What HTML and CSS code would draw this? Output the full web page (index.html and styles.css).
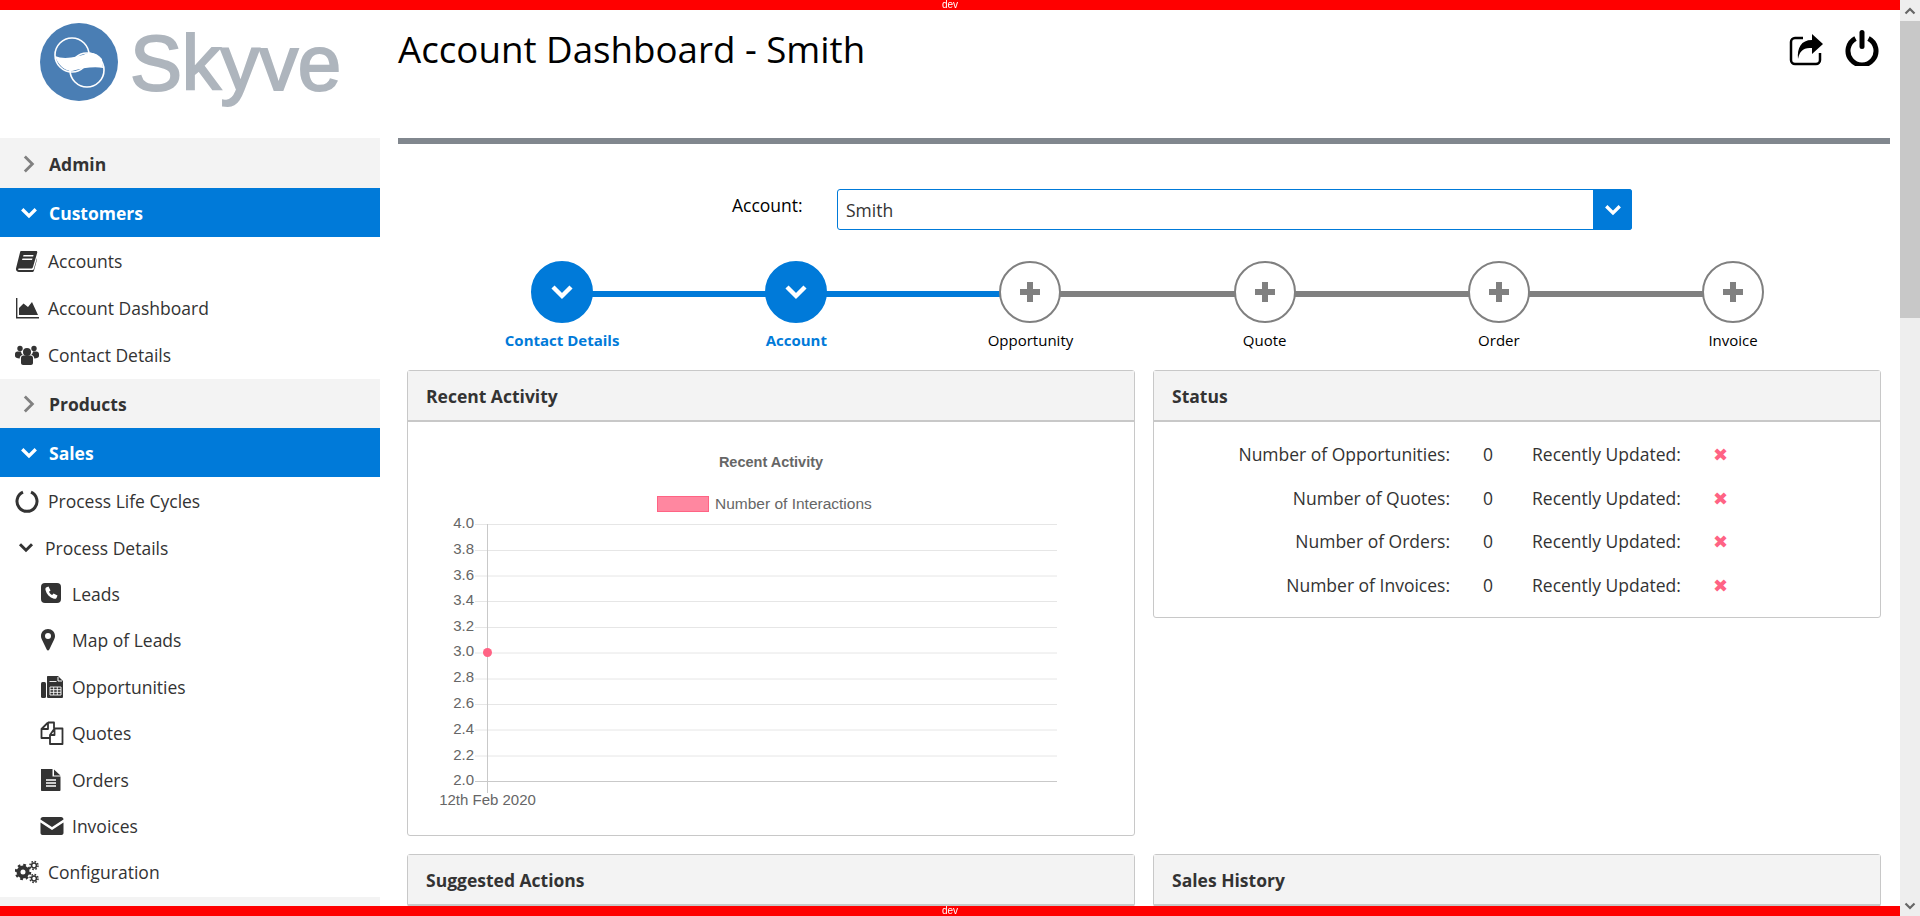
FILE: index.html
```html
<!DOCTYPE html>
<html lang="en">
<head>
    <meta charset="UTF-8">
    <meta name="viewport" content="width=device-width, initial-scale=1.0">
    <title>Account Dashboard - Smith</title>
    <link rel="stylesheet" href="styles.css">
</head>
<body>
    <svg class="icon-defs" aria-hidden="true">
        <symbol id="chev-down" viewBox="0 0 24 16"><path d="M3 3l9 9 9-9" fill="none" stroke="currentColor" stroke-width="4.4"/></symbol>
        <symbol id="chev-right" viewBox="0 0 16 24"><path d="M3 3l9 9-9 9" fill="none" stroke="currentColor" stroke-width="3.4"/></symbol>
    </svg>

    <div class="dev-bar dev-top">dev</div>
    <div class="dev-bar dev-bottom">dev</div>

    <div class="page">
        <aside class="sidebar">
            <div class="logo">
                <svg class="logo-mark" viewBox="0 0 78 78">
                    <circle cx="39" cy="39" r="39" fill="#4a7eb4"/>
                    <circle cx="32" cy="32" r="17" fill="none" stroke="#fff" stroke-width="1.6"/>
                    <circle cx="47" cy="47" r="17" fill="none" stroke="#fff" stroke-width="1.6"/>
                    <path d="M15 33C24 37 38 34 48 30C53 29 58 31 62 36L63 45C55 43 42 45 32 48C25 48 18 42 15 33Z" fill="#fff"/>
                </svg>
                <span class="logo-text">Skyve</span>
            </div>

            <nav>
                <div class="nav-group"><svg class="group-chev closed"><use href="#chev-right"/></svg>Admin</div>
                <div class="nav-group active"><svg class="group-chev"><use href="#chev-down"/></svg>Customers</div>
                <div class="nav-list customers-list">
                    <div class="nav-row">
                        <svg class="nav-icon" viewBox="0 0 24 24"><path d="M6 2h15c1 0 1.500.8 1.200 1.800L18 18c-.4 1-1 1.500-2 1.500H4c-1.200 0-1.200 1.500 0 1.500h13.500c.7 0 1-.3 1.300-1l3.200-11v1.500L19 21.500c-.3 1-1 1.500-2 1.500H4c-2.300 0-3.500-1.800-2.900-4L5 3.500C5.200 2.600 5.500 2 6 2zm2.500 4l-.4 1.500h10l.4-1.500zm-1 3.500L7 11h10l.5-1.500z" fill="#333"/></svg>
                        Accounts
                    </div>
                    <div class="nav-row">
                        <svg class="nav-icon" viewBox="0 0 24 24"><path d="M1 2h1.400v19H24v1.400H1z" fill="#333"/><path d="M4 19v-7l4.500-4.500L13 11l4-5 6 13z" fill="#333"/></svg>
                        Account Dashboard
                    </div>
                    <div class="nav-row">
                        <svg class="nav-icon" viewBox="0 0 24 24"><g fill="#333"><circle cx="12" cy="9" r="4"/><circle cx="5" cy="5.500" r="2.700"/><circle cx="19" cy="5.500" r="2.700"/><path d="M6 15c0-1.500 1-2.500 2.500-2.500h7c1.500 0 2.500 1 2.500 2.500v5c0 1.200-1 2-2 2H8c-1 0-2-.8-2-2z"/><path d="M0 11c0-1.500 1-2.500 2.500-2.500H6c.2 1.500.8 2.500 1.800 3.300C6 12.200 4.800 13.500 4.700 15.500 2 15.500 0 14.500 0 13z"/><path d="M24 11c0-1.500-1-2.500-2.500-2.500H18c-.2 1.500-.8 2.500-1.800 3.300 1.800.4 3 1.700 3.100 3.700 2.700 0 4.700-1 4.700-2.500z"/></g></svg>
                        Contact Details
                    </div>
                </div>
                <div class="nav-group"><svg class="group-chev closed"><use href="#chev-right"/></svg>Products</div>
                <div class="nav-group active"><svg class="group-chev"><use href="#chev-down"/></svg>Sales</div>
                <div class="nav-list sales-list">
                    <div class="nav-row">
                        <svg class="nav-icon" viewBox="0 0 24 24"><path d="M8 3.200a10 10 0 1 0 8 0" fill="none" stroke="#333" stroke-width="3"/></svg>
                        Process Life Cycles
                    </div>
                    <div class="nav-row nav-parent">
                        <svg class="parent-chev"><use href="#chev-down"/></svg>
                        Process Details
                    </div>
                    <div class="nav-row nav-sub">
                        <svg class="nav-icon" viewBox="0 0 24 24"><rect x="1" y="1" width="20" height="20" rx="4" fill="#333"/><path d="M6 5.500l2.500-1 2 4-1.500 1.300c.6 1.500 1.700 2.600 3.200 3.200l1.300-1.500 4 2-1 2.500c-.4.800-1.500 1-2.500.8C9.500 15.500 6.500 12.500 5.500 8c-.2-1 0-2 .5-2.500z" fill="#fff"/></svg>
                        Leads
                    </div>
                    <div class="nav-row nav-sub">
                        <svg class="nav-icon" viewBox="0 0 24 24"><path d="M8 1c4 0 7 3 7 7 0 1.500-.4 2.500-1 3.800L9.300 21.500c-.3.700-.8 1-1.300 1s-1-.3-1.300-1L2 11.800C1.400 10.500 1 9.500 1 8c0-4 3-7 7-7zm0 4a3 3 0 1 0 0 6 3 3 0 0 0 0-6z" fill="#333"/></svg>
                        Map of Leads
                    </div>
                    <div class="nav-row nav-sub">
                        <svg class="nav-icon" viewBox="0 0 24 24"><g fill="#333"><rect x="1" y="7" width="5" height="16" rx="1.500"/><path d="M8 1h10l5 5v15.500c0 1-.5 1.500-1.500 1.500h-13C7.500 23 7 22.500 7 21.500V2c0-.6.400-1 1-1z"/></g><path d="M18 2v4h4" fill="none" stroke="#fff"/><path d="M9.500 6.500h7M10 12h11v8H10zM13.700 12v8M17.300 12v8M10 14.700h11M10 17.300h11" fill="none" stroke="#fff" stroke-width=".9"/></svg>
                        Opportunities
                    </div>
                    <div class="nav-row nav-sub">
                        <svg class="nav-icon" viewBox="0 0 24 24"><path d="M8 1.500h6v6M8 1.500L1.500 8v9h8.500M1.500 8H8V1.500M14.500 7.500h8V23H10V14l4.500-6.500V14H10" fill="none" stroke="#333" stroke-width="1.800" stroke-linejoin="round"/></svg>
                        Quotes
                    </div>
                    <div class="nav-row nav-sub">
                        <svg class="nav-icon" viewBox="0 0 24 24"><path d="M1 1h11.500v7.500H20.500V22c0 .6-.4 1-1 1H2c-.6 0-1-.4-1-1zM14 1.500l6.500 6H14z" fill="#333"/><path d="M6 12h10M6 15h10M6 18h10" stroke="#fff" stroke-width="1.500"/></svg>
                        Orders
                    </div>
                    <div class="nav-row nav-sub">
                        <svg class="nav-icon" viewBox="0 0 24 24"><path d="M3 3h18c1.500 0 2.500 1 2.500 2.500L12 13 .5 5.500C.5 4 1.500 3 3 3zM.5 8.500L12 16l11.500-7.500V19c0 1.200-1 2-2 2h-19c-1 0-2-.8-2-2z" fill="#333"/></svg>
                        Invoices
                    </div>
                    <div class="nav-row">
                        <svg class="nav-icon" viewBox="0 0 24 24"><g fill="none" stroke="#333"><circle cx="8" cy="12" r="4.500" stroke-width="4"/><circle cx="8" cy="12" r="7" stroke-width="2.500" stroke-dasharray="2.700 2.800"/><circle cx="19" cy="5.500" r="2.400" stroke-width="1.500"/><circle cx="19" cy="5.500" r="4" stroke-width="1.500" stroke-dasharray="1.600 1.550"/><circle cx="19" cy="18.500" r="2.400" stroke-width="1.500"/><circle cx="19" cy="18.500" r="4" stroke-width="1.500" stroke-dasharray="1.600 1.550"/></g></svg>
                        Configuration
                    </div>
                </div>
                <div class="nav-group"></div>
            </nav>
        </aside>

        <main class="content">
            <header class="page-head">
                <h1>Account Dashboard - Smith</h1>
                <div class="head-actions">
                    <svg class="share-icon" viewBox="0 0 34 34"><path d="M14 6H6a4 4 0 0 0-4 4v18a4 4 0 0 0 4 4h21a4 4 0 0 0 4-4v-7" fill="none" stroke="#000" stroke-width="2.500"/><path d="M23 2l11 10-11 10v-6c-7 0-12 1-14 11-1-11 3-19 14-19z" fill="#000"/></svg>
                    <svg class="power-icon" viewBox="0 0 34 36"><path d="M10.500 8.500a14 14 0 1 0 13 0" fill="none" stroke="#000" stroke-width="5"/><path d="M17 2.500v14" fill="none" stroke="#000" stroke-width="5" stroke-linecap="round"/></svg>
                </div>
            </header>

            <div class="account-form">
                <label class="account-label">Account:</label>
                <div class="account-select">
                    <span class="account-value">Smith</span>
                    <span class="account-btn"><svg class="select-chev"><use href="#chev-down"/></svg></span>
                </div>
            </div>

            <div class="steps">
                <div class="step done">
                    <span class="step-dot"><svg class="step-chev"><use href="#chev-down"/></svg></span>
                    <span class="step-label">Contact Details</span>
                </div>
                <div class="step done">
                    <span class="step-dot"><svg class="step-chev"><use href="#chev-down"/></svg></span>
                    <span class="step-label">Account</span>
                </div>
                <div class="step">
                    <span class="step-dot"><span class="step-plus"></span></span>
                    <span class="step-label">Opportunity</span>
                </div>
                <div class="step">
                    <span class="step-dot"><span class="step-plus"></span></span>
                    <span class="step-label">Quote</span>
                </div>
                <div class="step">
                    <span class="step-dot"><span class="step-plus"></span></span>
                    <span class="step-label">Order</span>
                </div>
                <div class="step">
                    <span class="step-dot"><span class="step-plus"></span></span>
                    <span class="step-label">Invoice</span>
                </div>
            </div>

            <div class="panels">
                <section class="panel panel-chart">
                    <h2 class="panel-title">Recent Activity</h2>
                    <!-- viewBox uses page coordinates so the ticks are easy to line up -->
                    <svg class="chart" viewBox="408 422 726 413">
                        <text class="chart-title" x="771" y="467" text-anchor="middle">Recent Activity</text>
                        <rect x="657.500" y="496.500" width="51" height="15" fill="#ff87a0" stroke="#ff6384"/>
                        <text class="chart-legend" x="715" y="508.500">Number of Interactions</text>
                        <g stroke="#e6e6e6" stroke-width="1">
                            <path d="M475 524.500H1057M475 550.500H1057M475 576H1057M475 601.500H1057M475 627.500H1057M475 653H1057M475 679H1057M475 704.500H1057M475 730H1057M475 756H1057"/>
                        </g>
                        <path d="M475 781.500H1057M487.500 524V793" stroke="#c9c9c9" fill="none"/>
                        <g class="chart-tick" text-anchor="end">
                            <text x="474" y="528">4.0</text>
                            <text x="474" y="554">3.8</text>
                            <text x="474" y="580">3.6</text>
                            <text x="474" y="605">3.4</text>
                            <text x="474" y="631">3.2</text>
                            <text x="474" y="656">3.0</text>
                            <text x="474" y="682">2.8</text>
                            <text x="474" y="708">2.6</text>
                            <text x="474" y="734">2.4</text>
                            <text x="474" y="760">2.2</text>
                            <text x="474" y="785">2.0</text>
                        </g>
                        <text class="chart-tick" x="487.500" y="805" text-anchor="middle">12th Feb 2020</text>
                        <circle cx="487.500" cy="652.500" r="4.500" fill="#ff6384"/>
                    </svg>
                </section>

                <section class="panel panel-status">
                    <h2 class="panel-title">Status</h2>
                    <div class="status-grid">
                        <span class="status-label">Number of Opportunities:</span><span class="status-value">0</span><span>Recently Updated:</span><span class="status-x">&#10006;</span>
                        <span class="status-label">Number of Quotes:</span><span class="status-value">0</span><span>Recently Updated:</span><span class="status-x">&#10006;</span>
                        <span class="status-label">Number of Orders:</span><span class="status-value">0</span><span>Recently Updated:</span><span class="status-x">&#10006;</span>
                        <span class="status-label">Number of Invoices:</span><span class="status-value">0</span><span>Recently Updated:</span><span class="status-x">&#10006;</span>
                    </div>
                </section>

                <section class="panel">
                    <h2 class="panel-title">Suggested Actions</h2>
                </section>

                <section class="panel">
                    <h2 class="panel-title">Sales History</h2>
                </section>
            </div>
        </main>

        <div class="scrollbar">
            <div class="scroll-btn"><svg class="scroll-chev up"><use href="#chev-down"/></svg></div>
            <div class="scroll-thumb"></div>
            <div class="scroll-track"></div>
            <div class="scroll-btn"><svg class="scroll-chev"><use href="#chev-down"/></svg></div>
        </div>
    </div>
</body>
</html>
```

FILE: styles.css
```css
html, body {
    margin: 0;
    padding: 0;
    height: 100%;
    overflow: hidden;
}

body {
    font-family: 'Open Sans', sans-serif;
    font-size: 17.5px;
    color: #333;
    background-color: #fff;
}

.icon-defs {
    display: none;
}

/* red environment bars sit over the page */
.dev-bar {
    position: fixed;
    left: 0;
    width: 1900px;
    height: 10px;
    background-color: #f00;
    color: #fff;
    font-family: 'Liberation Sans', sans-serif;
    font-size: 10px;
    line-height: 10px;
    text-align: center;
    z-index: 10;
}

.dev-top {
    top: 0;
}

.dev-bottom {
    bottom: 0;
}

.page {
    display: flex;
    height: 916px;
    overflow: hidden;
}

/* sidebar */
.sidebar {
    flex: 0 0 380px;
    height: 916px;
}

.logo {
    display: flex;
    align-items: flex-start;
    gap: 12px;
    height: 138px;
    box-sizing: border-box;
    padding: 23px 0 0 40px;
}

.logo-mark {
    width: 78px;
    height: 78px;
}

.logo-text {
    margin-top: 1px;
    font-family: 'Liberation Sans', sans-serif;
    font-size: 78px;
    line-height: 78px;
    letter-spacing: -.3px;
    color: #aeb5bd;
    -webkit-text-stroke: 2px #aeb5bd;
}

.nav-group {
    display: flex;
    align-items: center;
    gap: 11px;
    height: 49px;
    padding-left: 20px;
    background-color: #f3f3f3;
    font-weight: 700;
}

.nav-group:first-child {
    padding-top: 1px;
}

.nav-group.active {
    background-color: #007ad9;
    color: #fff;
}

.group-chev {
    width: 18px;
    height: 12px;
    color: #fff;
}

.group-chev.closed {
    height: 20px;
    color: #808080;
}

.nav-list {
    display: flex;
    flex-direction: column;
}

.customers-list {
    height: 142px;
}

.customers-list .nav-row {
    flex: 1;
}

.sales-list {
    height: 420px;
    box-sizing: border-box;
    padding-top: 1px;
}

.sales-list .nav-row {
    flex: 0 0 46.4px;
}

.nav-row {
    display: flex;
    align-items: center;
    gap: 9px;
    padding-left: 15px;
}

.nav-sub {
    gap: 8px;
    padding-left: 40px;
}

.nav-parent {
    gap: 11px;
    padding-left: 18px;
}

.nav-icon {
    width: 24px;
    height: 24px;
}

.parent-chev {
    width: 16px;
    height: 11px;
    color: #333;
}

/* main column */
.content {
    flex: 0 0 1492px;
    margin-left: 18px;
    margin-right: 10px;
}

.page-head {
    display: flex;
    justify-content: space-between;
    align-items: flex-start;
    height: 144px;
    box-sizing: border-box;
    padding: 25px 11px 0 0;
    border-bottom: 6px solid #81878e;
}

.page-head h1 {
    margin: 0;
    font-size: 36.7px;
    font-weight: 400;
    line-height: 49px;
    color: #000;
}

.head-actions {
    display: flex;
    align-items: flex-start;
    gap: 22px;
    padding-top: 5px;
}

.share-icon {
    width: 34px;
    height: 34px;
    margin-top: 2px;
}

.power-icon {
    width: 34px;
    height: 36px;
}

.account-form {
    display: flex;
    align-items: flex-start;
    margin: 45px 0 0 334px;
}

.account-label {
    width: 105px;
    line-height: 32px;
    color: #000;
}

.account-select {
    display: flex;
    align-items: stretch;
    width: 795px;
    height: 41px;
    box-sizing: border-box;
    border: 1px solid #007ad9;
    border-radius: 3px;
}

.account-value {
    flex: 1;
    padding-left: 8px;
    line-height: 41px;
}

.account-btn {
    display: flex;
    align-items: center;
    justify-content: center;
    width: 39px;
    margin: -1px -1px -1px 0;
    background-color: #007ad9;
    border-radius: 0 3px 3px 0;
    color: #fff;
}

.select-chev {
    width: 18px;
    height: 12px;
}

/* steps */
.steps {
    display: flex;
    margin: 31px 0 0 47px;
}

.step {
    position: relative;
    flex: 0 0 234.2px;
    display: flex;
    flex-direction: column;
    align-items: center;
    gap: 6px;
    color: #000;
    font-size: 15px;
}

/* connector to the next step */
.step:not(:last-child)::after {
    content: "";
    position: absolute;
    left: 50%;
    top: 30px;
    width: 100%;
    height: 6px;
    background-color: #808080;
}

.step.done::after {
    background-color: #007ad9;
}

.step-dot {
    position: relative;
    z-index: 1;
    display: flex;
    align-items: center;
    justify-content: center;
    width: 62px;
    height: 62px;
    box-sizing: border-box;
    border: 2px solid #808080;
    border-radius: 50%;
    background-color: #fff;
}

.done .step-dot {
    border-color: #007ad9;
    background-color: #007ad9;
    color: #fff;
}

.done .step-label {
    color: #007ad9;
    font-weight: 700;
}

.step-label {
    line-height: 22px;
}

.step-chev {
    width: 24px;
    height: 16px;
}

.step-plus {
    width: 20px;
    height: 20px;
    background:
        linear-gradient(#808080, #808080) center / 20px 6px no-repeat,
        linear-gradient(#808080, #808080) center / 6px 20px no-repeat;
}

/* panels */
.panels {
    display: grid;
    grid-template-columns: 1fr 1fr;
    align-items: start;
    gap: 18px;
    width: 1474px;
    margin: 19px 0 0 9px;
}

.panel {
    border: 1px solid #c8c8c8;
    border-radius: 3px;
}

.panel-chart {
    height: 466px;
    box-sizing: border-box;
}

.panel-title {
    margin: 0;
    padding-left: 18px;
    height: 49px;
    line-height: 51px;
    font-size: 17.5px;
    font-weight: 700;
    background-color: #f3f3f3;
    border-bottom: 2px solid #c8c8c8;
}

.chart {
    display: block;
    width: 726px;
    height: 413px;
}

.chart-title {
    font: 700 14.5px 'Liberation Sans', sans-serif;
    fill: #666;
}

.chart-legend {
    font: 15.5px 'Liberation Sans', sans-serif;
    fill: #666;
}

.chart-tick {
    font: 15px 'Liberation Sans', sans-serif;
    fill: #666;
}

.status-grid {
    display: grid;
    grid-template-columns: 296px 82px 181px auto;
    grid-auto-rows: 43.8px;
    align-items: center;
    padding: 10px 0 9.8px;
}

.status-label {
    text-align: right;
}

.status-value {
    padding-left: 33px;
}

.status-x {
    padding-top: 2px;
    color: #ff6384;
    font-family: 'DejaVu Sans', sans-serif;
    font-size: 18px;
    line-height: 18px;
}

/* fake page scrollbar */
.scrollbar {
    flex: 0 0 20px;
    display: flex;
    flex-direction: column;
    height: 916px;
    background-color: #eee;
}

.scroll-btn {
    display: flex;
    align-items: center;
    justify-content: center;
    height: 21px;
    color: #666;
}

.scroll-thumb {
    height: 297px;
    background-color: #c8c8c8;
}

.scroll-track {
    flex: 1;
}

.scroll-chev {
    width: 12px;
    height: 8px;
}

.scroll-chev.up {
    transform: rotate(180deg);
}
```
